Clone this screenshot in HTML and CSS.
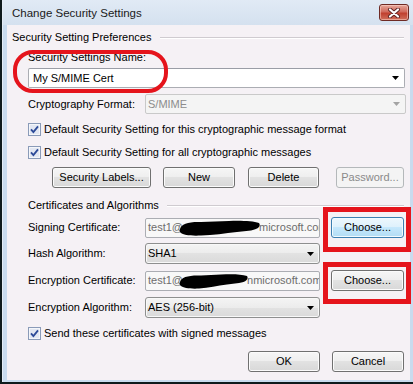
FILE: index.html
```html
<!DOCTYPE html>
<html>
<head>
<meta charset="utf-8">
<title>Change Security Settings</title>
<link rel="stylesheet" href="styles.css">
</head>
<body>
<div class="window">
  <div class="titlebar">
    <span class="title">Change Security Settings</span>
    <span class="close"><svg width="14" height="10" viewBox="0 0 14 10"><path d="M3 1.5 L11 8.5 M11 1.5 L3 8.5" stroke="#5a2222" stroke-width="4" stroke-linecap="round"/><path d="M3 1.5 L11 8.5 M11 1.5 L3 8.5" stroke="#ffffff" stroke-width="2.2" stroke-linecap="round"/></svg></span>
  </div>
  <div class="content">
    <div class="group g1"><span>Security Setting Preferences</span><i class="rule"></i></div>
    <div class="name-label">Security Settings Name:</div>
    <div class="combo edit name-combo"><span class="val">My S/MIME Cert</span><svg class="arrow" width="7" height="4" viewBox="0 0 7 4"><polygon points="0,0 7,0 3.5,4" fill="#000"/></svg></div>
    <div class="row r-format"><span class="lbl">Cryptography Format:</span><div class="combo disabled w-format"><span class="val">S/MIME</span><svg class="arrow" width="7" height="4" viewBox="0 0 7 4"><polygon points="0,0 7,0 3.5,4" fill="#a3a3a3"/></svg></div></div>
    <div class="check c1"><svg width="13" height="13" viewBox="0 0 13 13"><rect x="0.5" y="0.5" width="12" height="12" fill="#f4f6fa" stroke="#8a9bb8"/><rect x="2" y="2" width="9" height="9" fill="#e2e7f2"/><path d="M3 6.3 L5.4 9 L10 3.4" fill="none" stroke="#2c4a98" stroke-width="1.8"/></svg><span>Default Security Setting for this cryptographic message format</span></div>
    <div class="check c2"><svg width="13" height="13" viewBox="0 0 13 13"><rect x="0.5" y="0.5" width="12" height="12" fill="#f4f6fa" stroke="#8a9bb8"/><rect x="2" y="2" width="9" height="9" fill="#e2e7f2"/><path d="M3 6.3 L5.4 9 L10 3.4" fill="none" stroke="#2c4a98" stroke-width="1.8"/></svg><span>Default Security Setting for all cryptographic messages</span></div>
    <div class="buttons b1">
      <span class="btn w-labels">Security Labels...</span>
      <span class="btn w-new">New</span>
      <span class="btn w-delete">Delete</span>
      <span class="btn disabled w-pass">Password...</span>
    </div>
    <div class="group g2"><span>Certificates and Algorithms</span><i class="rule"></i></div>
    <div class="row r-sign">
      <span class="lbl">Signing Certificate:</span>
      <div class="field"><span>test1@</span><svg class="scribble" width="82" height="18" viewBox="0 0 82 18"><path d="M1 10 C2 5 10 2.5 22 3 L50 2 C62 1.5 74 2 80 4 C82 7 80 10 72 11.5 L58 13 C46 14.5 34 16 22 16.5 C12 17 4 16 2 14 C0.5 13 0.5 11.5 1 10 Z" fill="#000"/></svg><span class="tail">microsoft.com</span></div>
      <span class="btn focus w-choose">Choose...</span>
    </div>
    <div class="row r-hash">
      <span class="lbl">Hash Algorithm:</span>
      <div class="combo ro w-alg"><span class="val">SHA1</span><svg class="arrow" width="7" height="4" viewBox="0 0 7 4"><polygon points="0,0 7,0 3.5,4" fill="#000"/></svg></div>
    </div>
    <div class="row r-enc">
      <span class="lbl">Encryption Certificate:</span>
      <div class="field"><span>test1@</span><svg class="scribble s2" width="70" height="18" viewBox="0 0 70 18"><path d="M1 10 C2 5 10 3 22 3.5 L42 2.5 C52 2 62 2 68 4 C70 7 67 10 60 11 L48 12.5 C38 14 30 15.5 20 16.5 C12 17 4 16 2 14 C0.5 13 0.5 11.5 1 10 Z" fill="#000"/></svg><span class="tail">nmicrosoft.com</span></div>
      <span class="btn w-choose">Choose...</span>
    </div>
    <div class="row r-encalg">
      <span class="lbl">Encryption Algorithm:</span>
      <div class="combo ro w-alg"><span class="val">AES (256-bit)</span><svg class="arrow" width="7" height="4" viewBox="0 0 7 4"><polygon points="0,0 7,0 3.5,4" fill="#000"/></svg></div>
    </div>
    <div class="check c3"><svg width="13" height="13" viewBox="0 0 13 13"><rect x="0.5" y="0.5" width="12" height="12" fill="#f4f6fa" stroke="#8a9bb8"/><rect x="2" y="2" width="9" height="9" fill="#e2e7f2"/><path d="M3 6.3 L5.4 9 L10 3.4" fill="none" stroke="#2c4a98" stroke-width="1.8"/></svg><span>Send these certificates with signed messages</span></div>
    <div class="buttons b2">
      <span class="btn w-ok">OK</span>
      <span class="btn w-cancel">Cancel</span>
    </div>
  </div>
</div>
<div class="mark oval"></div>
<div class="mark box1"></div>
<div class="mark box2"></div>
</body>
</html>
```
FILE: styles.css
```css
* { box-sizing: border-box; }
html, body { margin: 0; padding: 0; }
body {
  position: relative;
  width: 413px;
  height: 384px;
  overflow: hidden;
  background: #0f1a1c;
  font-family: "Liberation Sans", Arial, sans-serif;
  font-size: 11px;
  line-height: 13px;
  color: #000;
}
.window {
  margin-left: 2px;
  width: 411px;
  height: 382px;
  background: #c9dbee;
  border-left: 1px solid #e4ecf5;
  display: flex;
  flex-direction: column;
}
.titlebar {
  height: 25px;
  flex: none;
  display: flex;
  align-items: flex-start;
  padding-left: 9px;
  background: linear-gradient(#e1eaf5, #d4e1ef);
}
.title {
  padding-top: 6px;
  font-size: 11.5px;
  line-height: 14px;
  color: #1a1a1a;
}
.close {
  margin-left: auto;
  margin-top: 4px;
  margin-right: 4px;
  width: 30px;
  height: 17px;
  border: 1px solid #6e2a24;
  border-radius: 3px;
  background: linear-gradient(#e6a89c, #d06a5c 45%, #c0402f 55%, #d0705c);
  box-shadow: inset 0 0 0 1px rgba(255,220,210,0.5);
  display: flex;
  align-items: center;
  justify-content: center;
}
.content {
  margin: 0 3px 0 4px;
  height: 355px;
  background: #f5f1f5;
  display: flex;
  flex-direction: column;
}
.group {
  display: flex;
  align-items: center;
  height: 13px;
  white-space: nowrap;
}
.group .rule {
  flex: 1;
  height: 2px;
  border-top: 1px solid #cfcbd0;
  border-bottom: 1px solid #ffffff;
  margin: 0 6px 0 9px;
}
.g1 { margin-top: 6px; padding-left: 5px; }
.g2 { margin-top: 11px; padding-left: 21px; }
.g2 .rule { margin-left: 8px; }
.name-label { margin-top: 7px; padding-left: 21px; height: 13px; }
.combo {
  display: flex;
  align-items: center;
  border: 1px solid #abadb3;
  border-radius: 2px;
  background: #fff;
  padding-left: 2px;
  white-space: nowrap;
  overflow: hidden;
  flex: none;
}
.combo .arrow { margin-left: auto; margin-right: 5px; flex: none; }
.combo.edit { padding-left: 4px; border-top-color: #9a9da6; }
.name-combo { margin: 4px 0 0 21px; width: 377px; height: 20px; }
.combo.disabled {
  background: #f4f4f4;
  border-color: #c9c9c9;
  color: #8c8c8c;
}
.combo.ro {
  border-color: #8e8f8f;
  border-radius: 3px;
  background: linear-gradient(#f4f4f4, #ececec 50%, #e2e2e2 50%, #dadada);
  box-shadow: inset 0 0 0 1px #f8f8f8;
}
.row { display: flex; align-items: center; height: 21px; flex: none; }
.lbl { width: 138px; padding-left: 21px; flex: none; white-space: nowrap; }
.r-format { margin-top: 6px; height: 20px; }
.w-format { width: 261px; height: 20px; }
.w-alg { width: 175px; height: 21px; }
.check {
  display: flex;
  align-items: center;
  gap: 3px;
  height: 13px;
  padding-left: 21px;
  white-space: nowrap;
  flex: none;
}
.check svg { flex: none; }
.c1 { margin-top: 9px; }
.c2 { margin-top: 10px; }
.c3 { margin-top: 9px; }
.buttons { display: flex; height: 21px; flex: none; }
.b1 { margin-top: 8px; }
.b2 { margin-top: 11px; justify-content: flex-end; padding-right: 6px; gap: 12px; }
.btn {
  display: flex;
  align-items: center;
  justify-content: center;
  height: 21px;
  border: 1px solid #707070;
  border-radius: 3px;
  background: linear-gradient(#f6f6f6, #eeeeee 50%, #e2e2e2 50%, #d8d8d8);
  box-shadow: inset 0 0 0 1px #fbfbfb;
  white-space: nowrap;
  flex: none;
}
.btn.disabled {
  border-color: #b4b8ba;
  background: #f4f4f4;
  box-shadow: none;
  color: #8a8a8a;
}
.btn.focus {
  border-color: #3c7fb1;
  background: linear-gradient(#edf7fd, #def1fc 50%, #c6e8fc 50%, #b2dcf4);
  box-shadow: inset 0 0 0 1px #f2fafe;
}
.w-labels { margin-left: 45px; width: 99px; }
.w-new { margin-left: 12px; width: 72px; }
.w-delete { margin-left: 13px; width: 71px; }
.w-pass { margin-left: 17px; width: 68px; }
.w-ok, .w-cancel { width: 72px; }
.w-choose { margin-left: 11px; width: 73px; }
.r-sign { margin-top: 5px; }
.r-hash { margin-top: 5px; }
.r-enc { margin-top: 6px; }
.r-encalg { margin-top: 6px; }
.field {
  width: 175px;
  height: 20px;
  flex: none;
  display: flex;
  align-items: center;
  border: 1px solid #abadb3;
  border-radius: 2px;
  background: #f8f8f8;
  color: #6d6d6d;
  padding-left: 2px;
  white-space: nowrap;
  overflow: hidden;
}
.field span { flex: none; }
.scribble { flex: none; margin-left: -4px; margin-right: -2px; }
.mark {
  position: absolute;
  border: 4px solid #e5141c;
  pointer-events: none;
}
.oval { left: 13px; top: 50px; width: 155px; height: 43px; border-radius: 20px; }
.box1 { left: 323px; top: 207px; width: 88px; height: 45px; border-width: 5px; }
.box2 { left: 323px; top: 262px; width: 88px; height: 42px; border-width: 5px; }
```
